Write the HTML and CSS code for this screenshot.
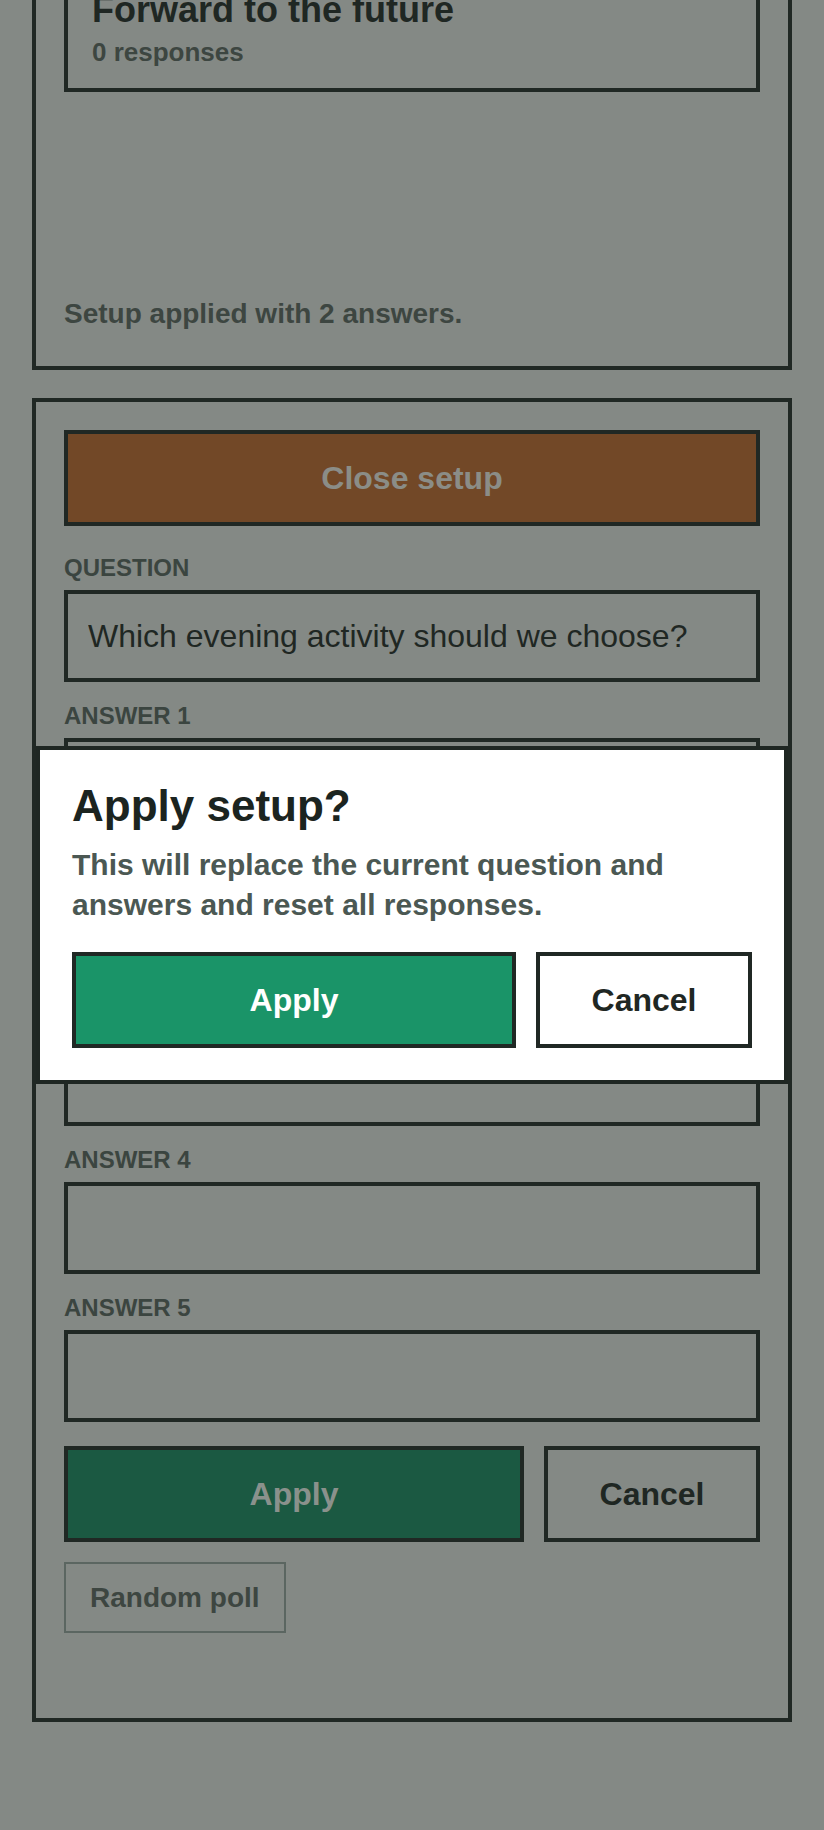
FILE: index.html
```html
<!DOCTYPE html>
<html lang="en">
<head>
<meta charset="utf-8">
<title>Poll setup</title>
<link rel="stylesheet" href="styles.css">
</head>
<body>
<main class="page">
  <section class="card">
    <div class="poll-box">
      <h2 class="poll-title">Forward to the future</h2>
      <p class="poll-count">0 responses</p>
    </div>
    <div class="results"></div>
    <p class="status">Setup applied with 2 answers.</p>
  </section>

  <section class="card">
    <form class="setup">
      <button type="button" class="btn btn-close">Close setup</button>
      <div class="field">
        <label class="field-label" for="q">Question</label>
        <input class="field-input" id="q" type="text" value="Which evening activity should we choose?">
      </div>
      <div class="field">
        <label class="field-label" for="a1">Answer 1</label>
        <input class="field-input" id="a1" type="text">
      </div>
      <div class="field">
        <label class="field-label" for="a2">Answer 2</label>
        <input class="field-input" id="a2" type="text">
      </div>
      <div class="field">
        <label class="field-label" for="a3">Answer 3</label>
        <input class="field-input" id="a3" type="text">
      </div>
      <div class="field">
        <label class="field-label" for="a4">Answer 4</label>
        <input class="field-input" id="a4" type="text">
      </div>
      <div class="field">
        <label class="field-label" for="a5">Answer 5</label>
        <input class="field-input" id="a5" type="text">
      </div>
      <div class="actions form-actions">
        <button type="button" class="btn btn-apply-muted">Apply</button>
        <button type="button" class="btn btn-cancel-muted">Cancel</button>
      </div>
      <button type="button" class="btn-random">Random poll</button>
      <div class="setup-status"></div>
    </form>
  </section>
</main>

<div class="overlay">
  <div class="dialog" role="dialog" aria-modal="true" aria-labelledby="dlg-title">
    <h2 class="dialog-title" id="dlg-title">Apply setup?</h2>
    <p class="dialog-text">This will replace the current question and answers and reset all responses.</p>
    <div class="actions">
      <button type="button" class="btn btn-apply">Apply</button>
      <button type="button" class="btn btn-cancel">Cancel</button>
    </div>
  </div>
</div>
</body>
</html>
```

FILE: styles.css
```css
* {
  box-sizing: border-box;
}

html, body {
  margin: 0;
  padding: 0;
}

body {
  background: #848985;
  font-family: "Liberation Sans", Arial, sans-serif;
  color: #1f2723;
  min-height: 1830px;
  overflow: hidden;
}

.page {
  margin-top: -71px;
  padding: 0 32px;
  display: flex;
  flex-direction: column;
  gap: 28px;
}

.card {
  border: 4px solid #202824;
  padding: 28px;
  display: flex;
  flex-direction: column;
}

.poll-box {
  border: 4px solid #202824;
  padding: 24px 24px 21px;
}

.poll-title {
  margin: 0;
  font-size: 36px;
  line-height: 41px;
  font-weight: 700;
  color: #1f2723;
}

.poll-count {
  margin: 7px 0 0;
  font-size: 26px;
  line-height: 30px;
  font-weight: 700;
  color: #3d4641;
}

.results {
  height: 206px;
}

.status {
  margin: 0 0 8px;
  font-size: 28px;
  line-height: 32px;
  font-weight: 700;
  color: #3d4641;
}

.setup {
  display: flex;
  flex-direction: column;
  gap: 20px;
}

.btn {
  font-family: inherit;
  font-size: 32px;
  font-weight: 700;
  height: 96px;
  border: 4px solid #202824;
  padding: 0;
  cursor: pointer;
}

.btn-close {
  width: 100%;
  margin-bottom: 8px;
  background: #724827;
  color: #8b8d87;
}

.field {
  display: flex;
  flex-direction: column;
  gap: 8px;
}

.field-label {
  font-size: 24px;
  line-height: 28px;
  font-weight: 700;
  text-transform: uppercase;
  color: #3b4540;
}

.field-input {
  height: 92px;
  border: 4px solid #202824;
  background: transparent;
  padding: 0 20px;
  font-family: inherit;
  font-size: 32px;
  color: #1f2723;
  outline: none;
}

.actions {
  display: flex;
  gap: 20px;
}

.form-actions {
  margin-top: 4px;
}

.actions .btn:first-child {
  flex: 1;
}

.actions .btn:last-child {
  flex: 0 0 216px;
}

.btn-apply-muted {
  background: #1b5942;
  color: #8a918c;
}

.btn-cancel-muted {
  background: transparent;
  color: #1f2723;
}

.btn-random {
  align-self: flex-start;
  font-family: inherit;
  font-size: 28px;
  line-height: 33px;
  font-weight: 700;
  padding: 17px 24px;
  border: 2px solid #5b6661;
  background: transparent;
  color: #3d4641;
  cursor: pointer;
}

.setup-status {
  min-height: 37px;
}

.overlay {
  position: fixed;
  inset: 0;
  display: flex;
  align-items: center;
  justify-content: center;
}

.dialog {
  width: 752px;
  background: #ffffff;
  border: 4px solid #1f2723;
  padding: 32px;
}

.dialog-title {
  margin: 0 0 15px;
  font-size: 44px;
  line-height: 48px;
  font-weight: 700;
  color: #1b2420;
}

.dialog-text {
  margin: 0 0 27px;
  font-size: 30px;
  line-height: 40px;
  font-weight: 700;
  color: #4b5853;
}

.btn-apply {
  background: #1a9468;
  color: #ffffff;
}

.btn-cancel {
  background: #ffffff;
  color: #1f2723;
}
```
